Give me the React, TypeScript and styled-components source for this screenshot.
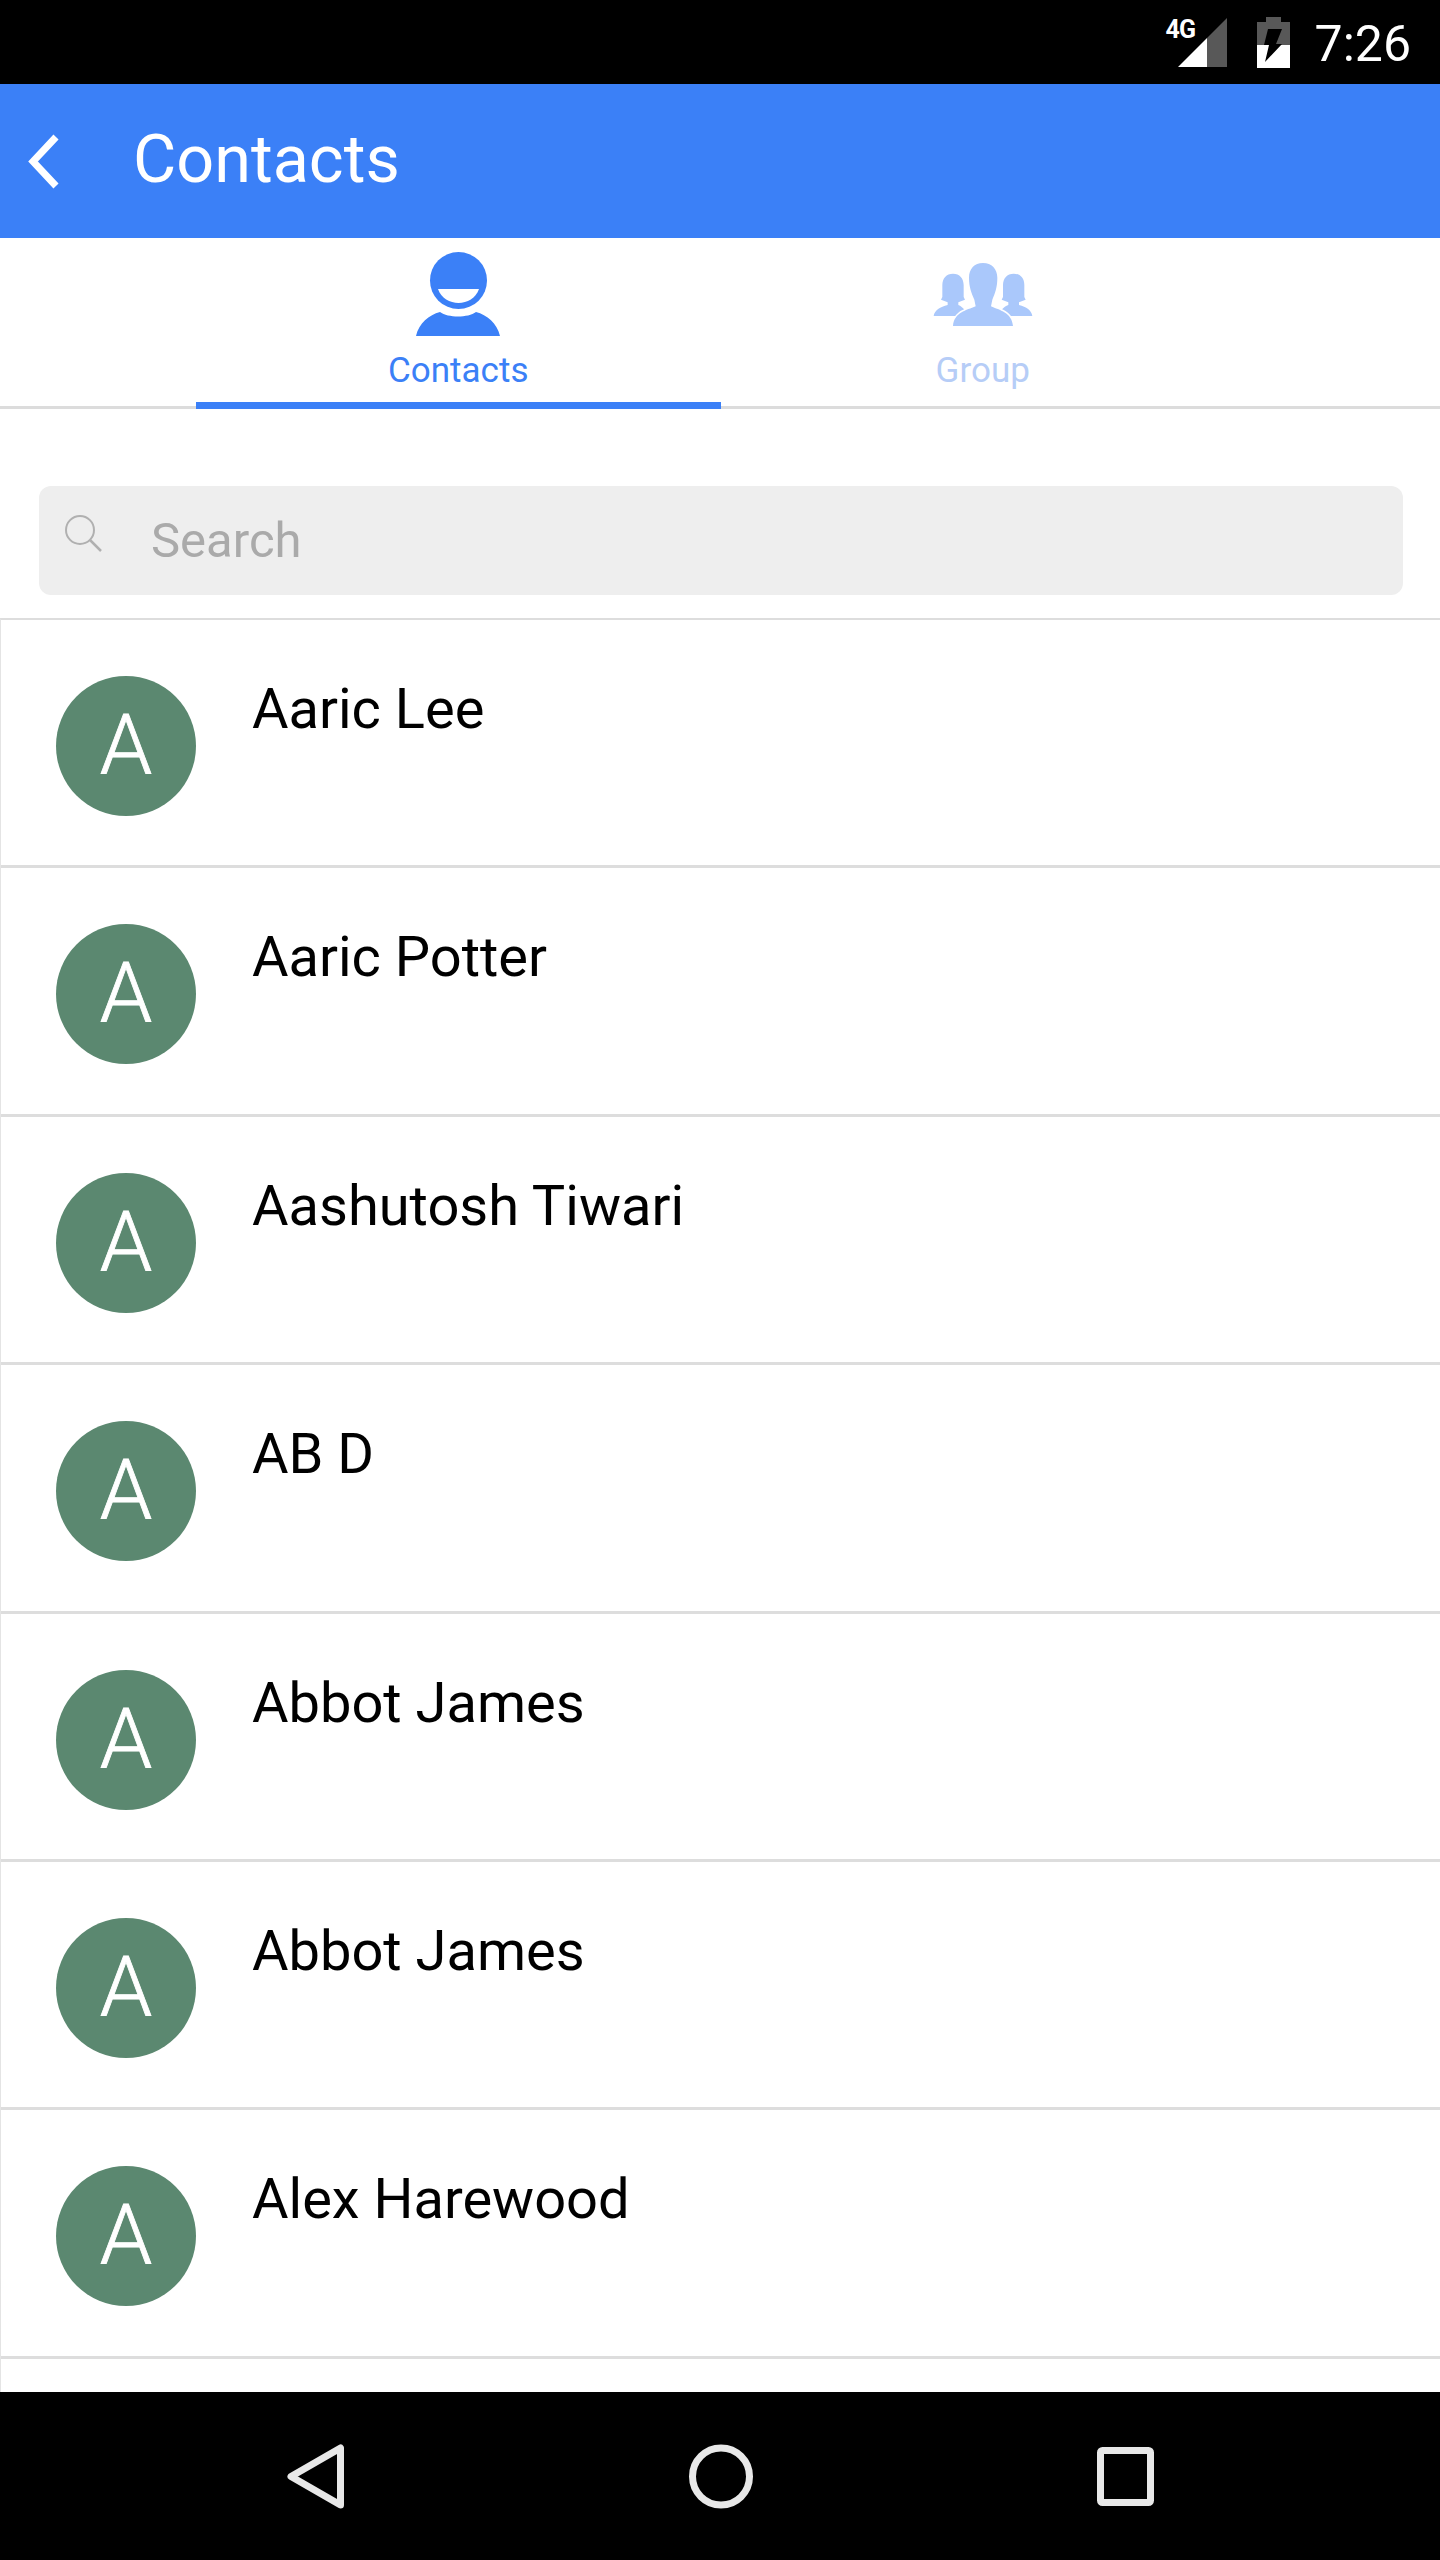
import React from "react";
import styled, { createGlobalStyle } from "styled-components";

const GlobalStyle = createGlobalStyle`
  html, body {
    margin: 0;
    padding: 0;
    background: #fff;
    font-family: Roboto, "Liberation Sans", sans-serif;
  }
`;

const Screen = styled.div`
  width: 1440px;
  height: 2560px;
  display: flex;
  flex-direction: column;
  overflow: hidden;
  background: #fff;
`;

const StatusBar = styled.div`
  height: 84px;
  flex: none;
  background: #000;
  display: flex;
  align-items: center;
  justify-content: flex-end;
  padding-right: 29px;
`;

const SignalWrap = styled.div`
  position: relative;
  width: 49px;
  height: 49px;
  margin-right: 30px;
`;

const NetworkBadge = styled.span`
  position: absolute;
  left: -12px;
  top: 0;
  color: #fff;
  font-size: 25px;
  line-height: 24px;
  font-weight: 700;
  letter-spacing: -1px;
`;

const Clock = styled.span`
  margin-left: 25px;
  padding-top: 4px;
  color: #fff;
  font-size: 50px;
  line-height: 58px;
`;

const Header = styled.header`
  height: 154px;
  flex: none;
  background: #3b80f7;
  display: flex;
  align-items: center;
  padding-left: 26px;
`;

const HeaderTitle = styled.h1`
  margin: 0 0 0 73px;
  padding-bottom: 5px;
  color: #fff;
  font-size: 66.5px;
  line-height: 76px;
  font-weight: 400;
`;

const Tabs = styled.nav`
  height: 171px;
  flex: none;
  box-sizing: border-box;
  display: flex;
  padding: 0 195px 0 196px;
  border-bottom: 3px solid #dcdcdc;
`;

const Tab = styled.div<{ $active?: boolean }>`
  flex: 1;
  height: 171px;
  box-sizing: border-box;
  display: flex;
  flex-direction: column;
  align-items: center;
  border-bottom: ${({ $active }) => ($active ? "7px solid #3b80f7" : "none")};
`;

const TabIcon = styled.div`
  height: 84px;
  margin: 14px 0 15px;
  display: flex;
  align-items: center;
  justify-content: center;
`;

const TabLabel = styled.span<{ $active?: boolean }>`
  font-size: 35px;
  line-height: 40px;
  color: ${({ $active }) => ($active ? "#3b80f7" : "#b6cdf7")};
`;

const SearchArea = styled.div`
  flex: none;
  padding: 77px 37px 23px 39px;
`;

const SearchBox = styled.div`
  height: 109px;
  border-radius: 12px;
  background: #eeeeee;
  display: flex;
  align-items: center;
  padding-left: 26px;
`;

const SearchGlyph = styled.div`
  display: flex;
  margin-bottom: 13px;
`;

const SearchText = styled.span`
  margin-left: 48px;
  font-size: 49px;
  line-height: 56px;
  color: #aaaaaa;
`;

const List = styled.div`
  flex: 1;
  min-height: 0;
  border-top: 2px solid #dddddd;
  border-left: 1px solid #e4e4e4;
`;

const Row = styled.div`
  height: 248.4px;
  box-sizing: border-box;
  display: flex;
  align-items: flex-start;
  padding: 56px 0 0 55px;
  border-bottom: 3px solid #dddddd;
`;

const Avatar = styled.div`
  width: 140px;
  height: 140px;
  flex: none;
  border-radius: 50%;
  background: #5b8870;
  display: flex;
  align-items: center;
  justify-content: center;
  color: #fff;
  font-size: 84px;
  line-height: 140px;
  font-weight: 300;
  -webkit-text-stroke: 0.8px #fff;
`;

const Name = styled.div`
  margin: 1px 0 0 56px;
  color: #000;
  font-size: 56px;
  line-height: 64px;
`;

const NavBar = styled.div`
  height: 168px;
  flex: none;
  background: #000;
  display: grid;
  grid-template-columns: 287px 57px 345px 64px 344px 57px;
  align-items: center;
`;

const NavSlot = styled.div<{ $col: number }>`
  grid-column: ${({ $col }) => $col};
  display: flex;
  justify-content: center;
`;

const names = [
  "Aaric Lee",
  "Aaric Potter",
  "Aashutosh Tiwari",
  "AB D",
  "Abbot James",
  "Abbot James",
  "Alex Harewood",
];

const SignalIcon = () => (
  <svg width="49" height="49" viewBox="0 0 49 49">
    <polygon points="0,49 29,20 29,49" fill="#fff" />
    <polygon points="29,20 49,0 49,49 29,49" fill="#585858" />
  </svg>
);

const BatteryIcon = () => (
  <svg width="33" height="51" viewBox="0 0 33 51">
    <polygon points="9,0 24,0 24,5 33,5 33,28 0,28 0,5 9,5" fill="#585858" />
    <rect x="0" y="28" width="33" height="23" fill="#fff" />
    <polygon points="11,12 25,12 19,27 25,27 8,45 12,28 7,28" fill="#000" />
  </svg>
);

const BackChevron = () => (
  <svg width="34" height="55" viewBox="0 0 34 55">
    <polyline points="30,3 7,27.5 30,52" fill="none" stroke="#fff" strokeWidth="7" />
  </svg>
);

const ContactIcon = () => (
  <svg width="84" height="84" viewBox="0 0 84 84">
    <path d="M0 84 C3 71 13 63 24 60 C32 66 52 66 60 60 C71 63 81 71 84 84 Z" fill="#3b80f7" />
    <circle cx="42.5" cy="28.5" r="28.5" fill="#3b80f7" />
    <path d="M22 37 L63 37 C60 46 51 51 42.5 51 C34 51 25 46 22 37 Z" fill="#fff" />
  </svg>
);

// same units as the reference at 3x, hence the odd viewBox
const GroupIcon = () => (
  <svg width="100" height="66" viewBox="70 60 300 198">
    <g fill="#aac8fb">
      <path d="M130 98 C150 98 162 112 162 132 L162 168 L166 176 L146 184 L146 192 C160 198 172 212 170 225 L72 225 C74 208 92 198 114 192 L114 184 L94 176 L98 168 L98 132 C98 112 110 98 130 98 Z" />
      <path d="M312 98 C332 98 344 112 344 132 L344 168 L348 176 L328 184 L328 192 C350 198 366 208 368 225 L270 225 C268 212 280 198 296 192 L296 184 L276 176 L280 168 L280 132 C280 112 292 98 312 98 Z" />
      <path
        d="M220 66 C246 66 263 84 263 110 C263 140 256 156 248 176 L244 196 C270 208 306 214 310 255 L130 255 C134 214 170 208 198 196 L194 176 C186 156 178 140 178 110 C178 84 194 66 220 66 Z"
        stroke="#fff"
        strokeWidth="10"
        paintOrder="stroke"
      />
    </g>
  </svg>
);

const SearchIcon = () => (
  <svg width="38" height="38" viewBox="0 0 38 38">
    <circle cx="15" cy="15" r="14" fill="none" stroke="#b0b0b0" strokeWidth="2" />
    <line x1="25" y1="25" x2="36" y2="36" stroke="#b0b0b0" strokeWidth="2.5" />
  </svg>
);

const NavBack = () => (
  <svg width="57" height="65" viewBox="0 0 57 65">
    <path d="M53.5 4 L53.5 61 L4 32.5 Z" fill="none" stroke="#e8e8e8" strokeWidth="7" strokeLinejoin="round" />
  </svg>
);

const NavHome = () => (
  <svg width="64" height="65" viewBox="0 0 64 65">
    <circle cx="32" cy="32.5" r="28.5" fill="none" stroke="#e8e8e8" strokeWidth="7" />
  </svg>
);

const NavRecent = () => (
  <svg width="57" height="59" viewBox="0 0 57 59">
    <rect x="3.5" y="3.5" width="50" height="52" rx="2" fill="none" stroke="#e8e8e8" strokeWidth="7" />
  </svg>
);

export default function App() {
  return (
    <>
      <GlobalStyle />
      <Screen>
        <StatusBar>
          <SignalWrap>
            <NetworkBadge>4G</NetworkBadge>
            <SignalIcon />
          </SignalWrap>
          <BatteryIcon />
          <Clock>7:26</Clock>
        </StatusBar>
        <Header>
          <BackChevron />
          <HeaderTitle>Contacts</HeaderTitle>
        </Header>
        <Tabs>
          <Tab $active>
            <TabIcon>
              <ContactIcon />
            </TabIcon>
            <TabLabel $active>Contacts</TabLabel>
          </Tab>
          <Tab>
            <TabIcon>
              <GroupIcon />
            </TabIcon>
            <TabLabel>Group</TabLabel>
          </Tab>
        </Tabs>
        <SearchArea>
          <SearchBox>
            <SearchGlyph>
              <SearchIcon />
            </SearchGlyph>
            <SearchText>Search</SearchText>
          </SearchBox>
        </SearchArea>
        <List>
          {names.map((name, i) => (
            <Row key={i}>
              <Avatar>A</Avatar>
              <Name>{name}</Name>
            </Row>
          ))}
        </List>
        <NavBar>
          <NavSlot $col={2}>
            <NavBack />
          </NavSlot>
          <NavSlot $col={4}>
            <NavHome />
          </NavSlot>
          <NavSlot $col={6}>
            <NavRecent />
          </NavSlot>
        </NavBar>
      </Screen>
    </>
  );
}
